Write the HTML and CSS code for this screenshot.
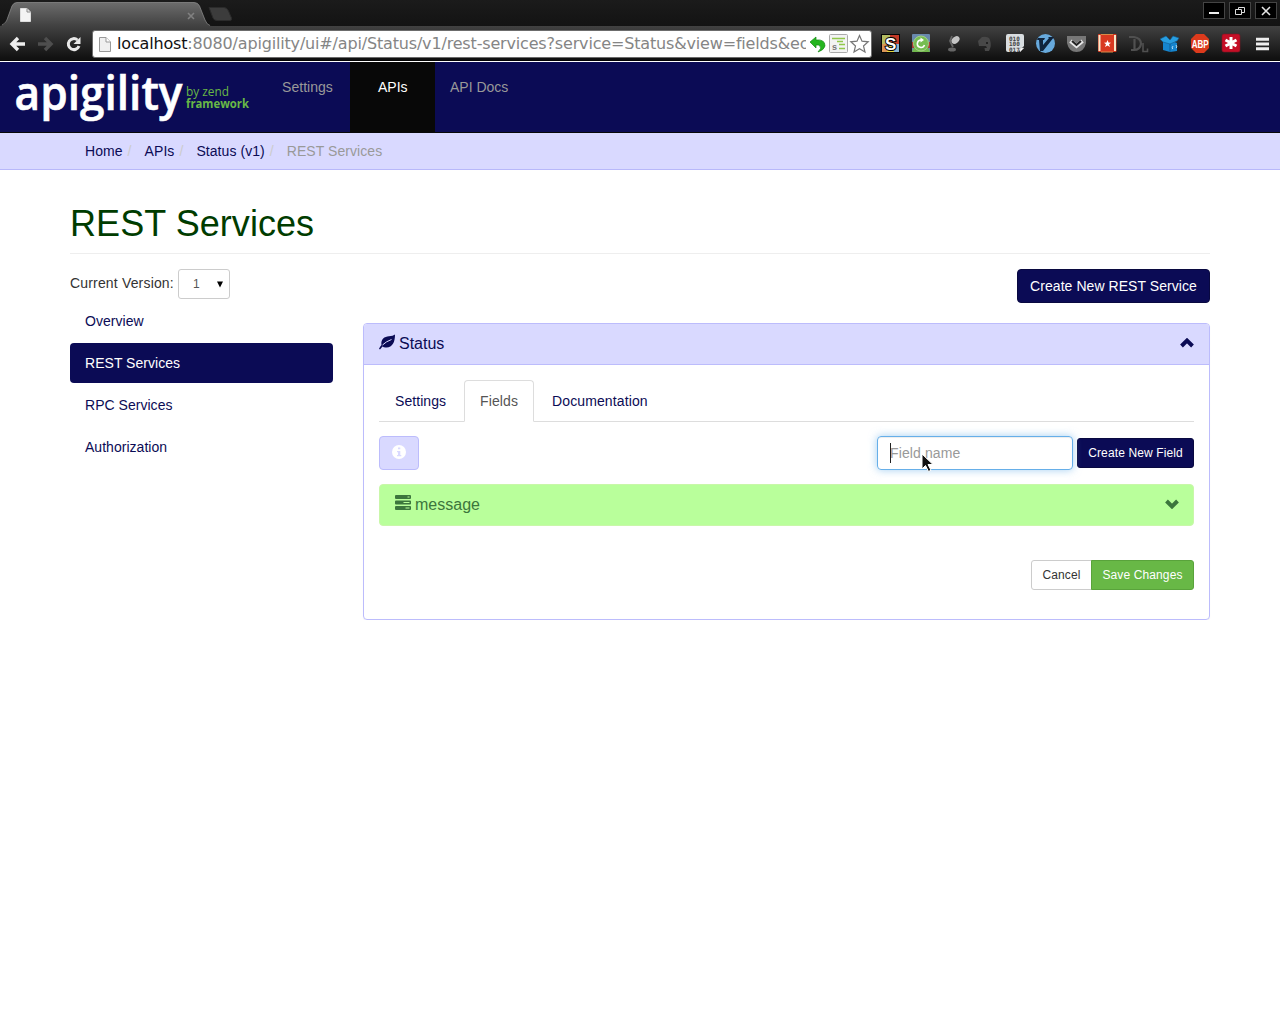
FILE: index.html
```html
<!DOCTYPE html>
<html lang="en">
<head>
<meta charset="utf-8">
<title>REST Services</title>
<link rel="stylesheet" href="styles.css">
</head>
<body>
<div class="browser">
  <div class="tabstrip">
    <svg class="tabs" width="240" height="26" viewBox="0 0 240 26">
      <defs><linearGradient id="tab" x1="0" y1="0" x2="0" y2="1"><stop offset="0" stop-color="#6c6c6c"/><stop offset="1" stop-color="#414141"/></linearGradient></defs>
      <path d="M0 26C5 25 6 22 8 17L12 6Q13.500 2.500 17 2.500H194Q198 2.500 199.500 6L205 20Q207 26 212 26Z" fill="url(#tab)"/>
      <path d="M2 25C6 23 7 20 8 17L12 6Q13.500 2.500 17 2.500H194Q198 2.500 199.500 6L205 20Q207 25 210 25.500" fill="none" stroke="#888" stroke-width=".8"/>
      <path d="M209 7.500H224Q227 7.500 228.500 11L231.500 18Q232 20.500 230 20.500H217Q214 20.500 213 18Z" fill="#3c3c3c" stroke="#2b2b2b"/>
      <path d="M20.500 8.500H27L30.500 12V21.500H20.500Z" fill="#f4f4f4" stroke="#ddd"/><path d="M27 8.500V12H30.500" fill="none" stroke="#888"/>
      <path d="M188 13L194 19M194 13L188 19" stroke="#818181" stroke-width="1.600"/>
    </svg>
    <div class="window-buttons">
      <span><svg width="20" height="15"><path d="M5 10H15" stroke="#eee" stroke-width="2"/></svg></span>
      <span><svg width="20" height="15" fill="none" stroke="#ddd"><path d="M8.500 4.500H14.500V9.500H8.500Z"/><path d="M5.500 6.500H11.500V11.500H5.500Z" fill="#000"/></svg></span>
      <span><svg width="20" height="15"><path d="M6 4L14 12M14 4L6 12" stroke="#e5e5e5" stroke-width="1.600"/></svg></span>
    </div>
  </div>
  <div class="toolbar">
    <svg class="controls" width="92" height="34" viewBox="0 26 92 34">
      <path d="M18 38L12 44L18 50M12.500 44H25" fill="none" stroke="#eee" stroke-width="3.400"/>
      <path d="M45 38L51 44L45 50M50.500 44H38" fill="none" stroke="#4e4e4e" stroke-width="3.400"/>
      <path d="M77.500 40A5.500 5.500 0 1 0 79 46" fill="none" stroke="#e8e8e8" stroke-width="3"/><path d="M80.500 37V44H73.500Z" fill="#e8e8e8"/>
    </svg>
    <div class="omnibox">
      <svg width="24" height="26"><path d="M6.500 6.500H13L17.500 11V20.500H6.500Z" fill="#f0f0f0" stroke="#999"/><path d="M13 6.500V11H17.500" fill="#fff" stroke="#999"/></svg>
      <div class="url"><b>localhost</b>:8080/apigility/ui#/api/Status/v1/rest-services?service=Status&amp;view=fields&amp;ec</div>
      <svg width="65" height="26" viewBox="806 31 65 26">
        <path d="M810 42L816 37V40Q825 39 825 46Q824 50 818 52Q822 48 820 46Q819 44.500 816 45V48Z" fill="#25b51f" stroke="#168a16" stroke-width=".7"/>
        <rect x="829.500" y="34.500" width="18" height="18" rx="1" fill="#f3f3f3" stroke="#aaa"/>
        <path d="M832 38.500H845M837 41.500H843M839 44.500H845M839 48.500H845" stroke="#91c84b" stroke-width="1.500"/><text class="s-small" x="832" y="50">s</text>
        <path d="M859.500 35.500L862 41.200L868.200 41.800L863.500 46L865 52L859.500 48.800L854 52L855.500 46L850.800 41.800L857 41.200Z" fill="#fff" stroke="#777" stroke-width="1.200"/>
      </svg>
    </div>
    <svg class="extensions" width="404" height="34" viewBox="876 26 404 34">
      <g><path d="M882 35H891V44H882Z" fill="#b4bc62"/><path d="M890 35H899V44H890Z" fill="#c43a27"/><path d="M882 44H890V52H882Z" fill="#d89558"/><path d="M890 44H899V52H890Z" fill="#86b2cf"/><path d="M887 46H894V52H887Z" fill="#e6d540"/><rect x="881.500" y="34.500" width="18" height="18" fill="none" stroke="#050505"/><text class="s-large" x="885" y="49.500">S</text></g>
      <g><rect x="912" y="34" width="18" height="18" rx="1" fill="#6989ad"/><path d="M912 42H930V48H912Z" fill="#a73c36"/><path d="M912 52Q913 48 915 47H927Q929 48 930 52Z" fill="#72b84d"/><circle cx="921" cy="43.500" r="7.500" fill="#76bd52" stroke="#a3d287"/><path d="M924.500 45A3.700 3.700 0 1 1 921 40" fill="none" stroke="#fff" stroke-width="1.600"/><path d="M920.500 37.500L924 40L920.500 42.500Z" fill="#fff"/></g>
      <g><ellipse cx="955.500" cy="40" rx="4.500" ry="3.200" transform="rotate(-40 955.500 40)" fill="#c4c4c4"/><path d="M952 36L950 41L953 47" fill="none" stroke="#666" stroke-width="1.800"/><ellipse cx="952" cy="49.500" rx="4" ry="2" fill="#666"/></g>
      <path d="M978 41L982 37Q989 36 990 40Q992 46 989 51L985 51L984.500 48L987 48L986 46L983 46L979 46Z" fill="#484848"/><circle cx="987" cy="43" r="1" fill="#151515"/>
      <g><path d="M1008 34H1022Q1024 34 1024 36V46L1018 52H1008Q1006 52 1006 50V36Q1006 34 1008 34Z" fill="#d9dde0"/><text class="bits" x="1009" y="40.500">010</text><text class="bits" x="1009" y="46">100</text><text class="bits" x="1009" y="51.500">017</text><path d="M1020 52V48H1024Z" fill="#fff" stroke="#aaa" stroke-width=".5"/></g>
      <g><circle cx="1045.500" cy="43.500" r="9.500" fill="#67a9dc"/><path d="M1038 38H1045L1044 40H1043L1043 45L1049 38L1048 37H1054L1043 51H1040L1039 40H1037Z" fill="#10243c"/></g>
      <g><path d="M1067 36H1086V43Q1084 52 1076.500 52Q1069 52 1067 43Z" fill="#777"/><path d="M1070.500 41L1076.500 46L1082.500 41" fill="none" stroke="#e8e8e8" stroke-width="4"/><path d="M1072 41L1076.500 45L1081 41" fill="none" stroke="#222" stroke-width="2"/></g>
      <g><rect x="1098" y="34" width="18.500" height="18" rx="1" fill="#d93920"/><path d="M1099.500 35V51M1115 35V51" stroke="#f7e8c9" stroke-width="2"/><path d="M1101 34.500H1113M1101 52H1113" stroke="#d98a48"/><path d="M1107.500 40L1108.500 42.500L1111 42.700L1109 44.300L1110 47L1107.500 45.500L1105 47L1106 44.300L1104 42.700L1106.500 42.500Z" fill="#fff"/></g>
      <g fill="none" stroke="#505050"><path d="M1129 37H1134Q1141 38 1141 44Q1140 50 1134 50H1131M1134.500 39V50" stroke-width="2.200"/><path d="M1143 43V51.500H1147.500V48.500" stroke-width="1.600"/></g>
      <g><path d="M1163 42L1170 40L1177 43V51L1170 52L1163 50Z" fill="#1685ce"/><path d="M1163 42L1170 44L1177 41L1179 38L1173 36L1170 40L1166 36L1160 39Z" fill="#279de0" stroke="#11598b" stroke-width=".6"/><path d="M1170 44V52" stroke="#105f97"/><path d="M1173 46L1172 48L1173 49M1176 45L1177 47L1176 48" stroke="#d4efff" stroke-width=".8" fill="none"/></g>
      <g><path d="M1196 34H1204L1209 39V48L1204 53H1196L1191 48V39Z" fill="#dc3a1c"/><text class="abp" x="1191.700" y="47.500" textLength="17" lengthAdjust="spacingAndGlyphs">ABP</text></g>
      <g><rect x="1222" y="34" width="18" height="18" rx="2" fill="#c50e26" stroke="#851422" stroke-width=".6"/><path d="M1231 37V49M1225.500 40L1236.500 46M1225.500 46L1236.500 40" stroke="#fff" stroke-width="3"/></g>
      <path d="M1256 39.300H1269M1256 44H1269M1256 48.700H1269" stroke="#eee" stroke-width="3"/>
    </svg>
  </div>
</div>
<header class="navbar">
  <svg class="brand" width="267" height="70" viewBox="0 62 267 70" aria-label="apigility by zend framework">
    <text class="wordmark" x="14.500" y="110" textLength="168" lengthAdjust="spacingAndGlyphs">apigility</text>
    <text class="tagline" x="186" y="96" textLength="43" lengthAdjust="spacingAndGlyphs">by zend</text>
    <text class="tagline strong" x="186" y="108" textLength="63" lengthAdjust="spacingAndGlyphs">framework</text>
  </svg>
  <nav class="main-nav"><a class="wide">Settings</a><a class="current">APIs</a><a>API Docs</a></nav>
</header>
<div class="breadcrumb"><a>Home</a><i>/</i><a>APIs</a><i>/</i><a>Status (v1)</a><i>/</i><span>REST Services</span></div>
<main>
  <h1>REST Services</h1>
  <div class="columns">
    <aside>
      <div class="version"><label>Current Version:</label><div class="select">1<svg width="6" height="7"><path d="M0 .5H6L3 6.500Z"/></svg></div></div>
      <nav class="side-nav"><a>Overview</a><a class="active">REST Services</a><a>RPC Services</a><a>Authorization</a></nav>
    </aside>
    <section class="content">
      <button class="primary create">Create New REST Service</button>
      <article class="panel">
        <div class="panel-heading">
          <svg width="17" height="17" viewBox="0 0 17 17"><path d="M16 .5C16 8 13.500 13.500 7.500 13.500Q5 13.800 3.500 12.500L1 15.500L0 14.800Q1 12.500 2.500 11C1.500 5 5.500 2.500 10 2.200Q14 2 16 .5Z" fill="currentColor"/><path d="M3.500 11Q7 7.500 12.500 5.500" fill="none" stroke="#d9d9ff" stroke-width="1"/></svg>
          <span>Status</span>
          <svg class="chevron" width="14" height="10" viewBox="0 0 14 10"><path d="M1.500 8L7 2.500L12.500 8" fill="none" stroke="currentColor" stroke-width="3.900"/></svg>
        </div>
        <div class="panel-body">
          <nav class="tabs-nav"><a class="first">Settings</a><a class="selected">Fields</a><a>Documentation</a></nav>
          <div class="field-bar">
            <button class="info"><svg width="14" height="14"><circle cx="7" cy="7" r="7" fill="#fff"/><path d="M6 2.500H8.300V4.300H6ZM5 6H8.300V10H9.300V11.200H5V10H6V7.200H5Z" fill="#d9d9ff"/></svg></button>
            <div class="field-input"><span class="caret"></span>Field name
              <svg class="pointer" width="15" height="20" viewBox="0 0 15 20"><path d="M1 1V16L4.500 12.500L7.500 18.500L10 17.200L7 11.500H12Z" fill="#111" stroke="#fff"/></svg>
            </div>
            <button class="primary small">Create New Field</button>
          </div>
          <div class="message">
            <svg width="16" height="16" viewBox="0 0 16 16"><path d="M1 0H15Q16 0 16 1V3Q16 4 15 4H1Q0 4 0 3V1Q0 0 1 0ZM1 5.500H15Q16 5.500 16 6.500V8.500Q16 9.500 15 9.500H1Q0 9.500 0 8.500V6.500Q0 5.500 1 5.500ZM1 11H15Q16 11 16 12V14Q16 15 15 15H1Q0 15 0 14V12Q0 11 1 11Z" fill="currentColor"/><path d="M12.500 2H14.500M8.500 7.500H14.500M10.500 13H14.500" stroke="#b9ff9b" stroke-width="1"/></svg>
            <span>message</span>
            <svg class="chevron" width="14" height="10" viewBox="0 0 14 10"><path d="M1.500 2L7 7.500L12.500 2" fill="none" stroke="currentColor" stroke-width="3.900"/></svg>
          </div>
          <div class="actions"><button class="cancel small">Cancel</button><button class="save small">Save Changes</button></div>
        </div>
      </article>
    </section>
  </div>
</main>
</body>
</html>
```
FILE: styles.css
```css
* { box-sizing: border-box; }
body { margin: 0; background: #fff; color: #333; font: 14px/20px "Liberation Sans", Arial, sans-serif; }
svg { display: block; flex: none; }
.browser { height: 62px; background: #171717; border-bottom: 1px solid #fff; }
.tabstrip { height: 26px; display: flex; justify-content: space-between; background: linear-gradient(#1b1b1b, #131313); }
.window-buttons { display: flex; gap: 4px; padding: 2px 3px 0 0; height: 20px; }
.window-buttons span { border: 1px solid #444; background: #000; height: 17px; width: 22px; overflow: hidden; }
.toolbar { height: 35px; display: flex; align-items: flex-start; background: linear-gradient(#414141, #111 95%); border-bottom: 1px solid #050505; }
.omnibox { width: 780px; height: 28px; margin-top: 4px; display: flex; background: #fff; border: 1px solid #6c6c6c; border-radius: 3px; overflow: hidden; }
.url { width: 689px; overflow: hidden; white-space: nowrap; color: #858585; font: 16px/25px "DejaVu Sans", sans-serif; letter-spacing: -.17px; }
.url b { font-weight: 400; color: #111; }
.extensions { margin-left: 4px; }
.s-small { font: bold 9px "Liberation Sans", sans-serif; fill: #777; }
.s-large { font: bold 17px "Liberation Sans", sans-serif; fill: #fff; stroke: #000; stroke-width: 2; paint-order: stroke; }
.bits { font: bold 6px "DejaVu Sans Mono", monospace; fill: #444; }
.abp { font: bold 10px "Liberation Sans", sans-serif; fill: #fff; }
.navbar { height: 71px; display: flex; background: #0b0b55; border-bottom: 1px solid #080808; }
.wordmark { font: 600 47px "Open Sans", sans-serif; fill: #fff; stroke: #fff; stroke-width: .6; }
.tagline { font: 13px "Open Sans", sans-serif; fill: #68b846; }
.strong { font-weight: 700; }
.main-nav { display: flex; }
.main-nav a { padding: 15px; color: #999; }
.main-nav .wide { width: 83px; letter-spacing: .04px; }
.main-nav .current { width: 85px; padding-left: 28px; background: #080808; color: #fff; }
.breadcrumb { height: 37px; padding: 8px 85px; display: flex; background: #d9d9ff; border-bottom: 1px solid #b8b8fa; color: #0b0b55; letter-spacing: .06px; }
.breadcrumb i { width: 22px; padding-left: 5px; color: #ccc; font-style: normal; }
.breadcrumb span { color: #999; }
main { width: 1140px; margin: 0 auto; padding-top: 34px; }
h1 { height: 50px; margin: 0 0 15px; border-bottom: 1px solid #eee; color: #003c00; font-size: 36px; font-weight: 400; line-height: 39px; letter-spacing: .06px; }
.columns { display: grid; grid-template-columns: 263px 847px; gap: 30px; }
.version { height: 32px; display: flex; gap: 4px; }
.version label { width: 104px; line-height: 28px; letter-spacing: .17px; white-space: nowrap; }
.select { width: 52px; height: 30px; display: flex; align-items: center; justify-content: space-between; padding: 0 6px 0 14px; border: 1px solid #ccc; border-radius: 3px; color: #555; font-size: 12px; }
.side-nav { display: grid; gap: 2px; letter-spacing: .03px; }
.side-nav a { height: 40px; padding: 10px 15px; border-radius: 4px; color: #0b0b55; }
.side-nav .active { background: #0b0b55; color: #fff; }
.content { display: flex; flex-direction: column; }
button { height: 34px; padding: 0 12px; border: 1px solid transparent; border-radius: 4px; font: 14px/20px "Liberation Sans", Arial, sans-serif; letter-spacing: .06px; }
.primary { background: #0b0b55; border-color: #090940; color: #fff; }
.create { align-self: flex-end; width: 193px; margin-bottom: 20px; white-space: nowrap; }
.small { height: 30px; padding: 0 10px; border-radius: 3px; font-size: 12px; line-height: 18px; white-space: nowrap; letter-spacing: .12px; }
.panel { height: 297px; border: 1px solid #bcbcfc; border-radius: 4px; box-shadow: 0 1px 1px #0000000d; }
.panel-heading { height: 41px; display: flex; align-items: flex-start; padding: 10px 15px; gap: 3px; background: #d9d9ff; border-bottom: 1px solid #bcbcfc; border-radius: 3px 3px 0 0; color: #0b0b55; font-size: 16px; }
.panel-heading .chevron { margin: 4px 0 0 auto; }
.panel-body { padding: 15px; }
.tabs-nav { height: 42px; display: flex; gap: 2px; border-bottom: 1px solid #ddd; color: #0b0b55; letter-spacing: .12px; }
.tabs-nav a { height: 42px; padding: 10px 15px; border: 1px solid transparent; }
.tabs-nav .first { width: 83px; letter-spacing: .06px; }
.tabs-nav .selected { width: 70px; background: #fff; color: #555; border-color: #ddd #ddd #fff; border-radius: 4px 4px 0 0; }
.field-bar { height: 34px; margin-top: 14px; display: flex; align-items: center; gap: 4px; }
.info { width: 40px; margin-right: auto; display: flex; justify-content: center; align-items: center; padding: 0 0 2px; background: #d9d9ff; border-color: #bcbcfc; }
.field-input { position: relative; width: 196px; height: 34px; padding: 6px 12px; border: 1px solid #66afe9; border-radius: 4px; color: #999; letter-spacing: .12px; box-shadow: inset 0 1px 1px #00000013, 0 0 8px #66afe999; }
.caret { position: absolute; left: 12px; top: 6px; width: 1px; height: 20px; background: #222; }
.pointer { position: absolute; left: 43px; top: 16px; }
.field-bar .primary { width: 117px; }
.message { height: 42px; margin-top: 14px; padding: 10px 14px 10px 15px; display: flex; align-items: flex-start; gap: 4px; background: #b9ff9b; border: 1px solid #c9f7a9; border-radius: 4px; color: #3c763d; font-size: 16px; }
.message .chevron { margin: 4px 0 0 auto; }
.actions { margin-top: 34px; display: flex; justify-content: flex-end; }
.cancel { width: 61px; background: #fff; border-color: #ccc; border-radius: 3px 0 0 3px; margin-right: -1px; color: #333; }
.save { width: 103px; background: #68b846; border-color: #59a33b; border-radius: 0 3px 3px 0; color: #fff; }
```
